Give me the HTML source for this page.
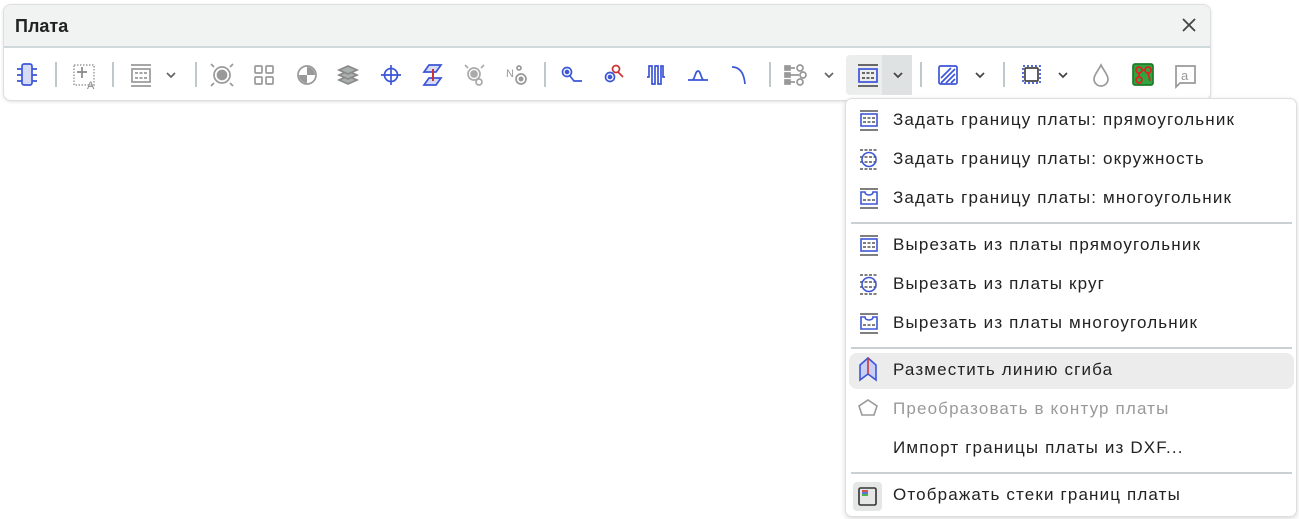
<!DOCTYPE html>
<html><head><meta charset="utf-8"><style>
*{box-sizing:border-box;margin:0;padding:0}
body{width:1299px;height:519px;background:#fff;position:relative;overflow:hidden;font-family:"Liberation Sans","Noto Sans CJK SC",sans-serif}
.panel{position:absolute;left:3px;top:4px;width:1208px;height:97px;border:1px solid #dcdfe0;border-radius:8px;background:#fff;box-shadow:0 1px 3px rgba(0,0,0,.12);overflow:hidden}
.hdr{height:43px;background:#f1f2f2;border-bottom:2px solid #cfd8da;position:relative}
.hdr b{position:absolute;left:11px;top:11px;font-size:18px;color:#222}
.x{position:absolute;right:12px;top:11px}
.sep{position:absolute;top:62px;width:2px;height:25px;background:#bfc8ca}
.menu{position:absolute;left:845px;top:98px;width:452px;height:419px;background:#fff;border:1px solid #dcdfe0;border-radius:7px;box-shadow:0 2px 6px rgba(0,0,0,.15)}
.it{position:absolute;left:47px;font-size:17px;letter-spacing:1.15px;color:#222}
.ms{position:absolute;left:5px;width:441px;height:2px;background:#c9d1d3}
</style></head><body>
<div class="panel"><div class="hdr"><b>Плата</b>
<svg class="x" width="18" height="18" viewBox="0 0 18 18"><path d="M3 3L15 15M15 3L3 15" stroke="#444" stroke-width="1.8"/></svg></div></div>

<svg style="position:absolute;left:0;top:0" width="1299" height="110">
<g fill="none" stroke-width="1.7">
<rect x="22" y="64" width="10" height="21" rx="2" fill="#d6dcf5" stroke="#3d56d6"/><path d="M17 69h5M32 69h5M17 75h5M32 75h5M17 81h5M32 81h5" stroke="#3d56d6"/>
<rect x="74" y="65" width="20" height="20" stroke="#aaa" stroke-dasharray="1.5 1.5"/><path d="M77 72h10M82 67v11" stroke="#888"/>
<text x="87" y="89" font-size="11" fill="#888" stroke="none" font-family="Liberation Sans">A</text>
<g stroke="#999"><path d="M131 65h20M131 86h20"/><rect x="132" y="69" width="18" height="13"/><path d="M135 73h12M135 78h12" stroke-dasharray="3 1.5"/></g>
<path d="M167 73l4 4 4-4" stroke="#666"/>
<g stroke="#999"><circle cx="222" cy="75" r="8"/><circle cx="222" cy="75" r="4.5" fill="#999"/><path d="M211 64l3 3M233 64l-3 3M211 86l3-3M233 86l-3-3"/></g>
<g stroke="#999"><rect x="255" y="66" width="7" height="7" rx="1"/><rect x="266" y="66" width="7" height="7" rx="1"/><rect x="255" y="77" width="7" height="7" rx="1"/><rect x="266" y="77" width="7" height="7" rx="1"/></g>
<circle cx="307" cy="75" r="9" stroke="#999"/><path d="M307 75V67A8 8 0 0 1 315 75ZM307 75H299A8 8 0 0 0 307 83Z" fill="#999"/>
<g fill="#aab0b0" stroke="#888"><path d="M339 80l9-4 9 4-9 4z"/><path d="M339 75l9-4 9 4-9 4z"/><path d="M339 70l9-4 9 4-9 4z"/></g>
<g stroke="#3d56d6"><circle cx="391" cy="75" r="6.5"/><path d="M381 75h20M391 65v20"/></g>
<g stroke="#3d56d6" fill="#d6dcf5"><path d="M424 72l5-7h12l-5 7z"/><path d="M424 85l5-7h12l-5 7z"/></g><path d="M433 69v12" stroke="#c33" stroke-width="2"/>
<g stroke="#aaa"><circle cx="474" cy="74" r="6"/><circle cx="474" cy="74" r="3" fill="#aaa"/><path d="M465 65l3 3M484 65l-3 3"/><circle cx="479" cy="82" r="3"/></g>
<text x="506" y="77" font-size="11" fill="#999" stroke="none" font-family="Liberation Sans">N</text><circle cx="521" cy="79" r="5" stroke="#999"/><circle cx="521" cy="79" r="2.5" fill="#999"/><circle cx="519" cy="68" r="2" stroke="#999"/>
<g stroke="#3d56d6"><circle cx="567" cy="72" r="4.5"/><circle cx="567" cy="72" r="1.5" fill="#3d56d6"/><path d="M570 76l4 5h8"/></g>
<g stroke="#3d56d6"><circle cx="610" cy="77" r="4.5"/><circle cx="610" cy="77" r="1.5" fill="#3d56d6"/></g><g stroke="#c33"><circle cx="616" cy="69" r="3.5"/><path d="M618 72l5 5"/></g>
<path d="M647 77h2V66h3v18h3V66h3v18h3V66h2v11h2" stroke="#3d56d6"/>
<path d="M688 80h20M692 80c3 0 3-9 6-9s3 9 6 9" stroke="#3d56d6"/>
<path d="M732 67c8 0 12 6 13 17" stroke="#3d56d6"/>
<g stroke="#999"><rect x="785" y="66" width="5" height="4" fill="#999"/><rect x="785" y="73" width="5" height="4" fill="#999"/><rect x="785" y="80" width="5" height="4" fill="#999"/><path d="M790 68h5M790 75h9M790 82h5"/><circle cx="800" cy="68" r="3"/><circle cx="803" cy="75" r="3"/><circle cx="800" cy="82" r="3"/></g>
<path d="M825 73l4 4 4-4" stroke="#666"/>
</g>
<rect x="846" y="55" width="66" height="40" rx="4" fill="#eceeee"/><rect x="882" y="55" width="30" height="40" fill="#dfe2e2"/>
<g fill="none" stroke-width="1.7">
<g stroke="#3d56d6"><path d="M858 65h20M858 86h20" stroke="#555"/><rect x="859" y="69" width="18" height="13"/><path d="M862 73h12M862 78h12" stroke="#555" stroke-dasharray="3 1.5"/></g>
<path d="M894 73l4 4 4-4" stroke="#444"/>
<rect x="939" y="66" width="18" height="18" rx="1.5" stroke="#3d56d6"/><path d="M941 78l10-10M941 83l14-14M946 83l9-9M951 83l4-4" stroke="#3d56d6"/>
<path d="M976 73l4 4 4-4" stroke="#444"/>
<rect x="1023" y="66" width="17" height="17" stroke="#3d56d6" stroke-dasharray="2 2"/><rect x="1025" y="68" width="13" height="13" rx="1" stroke="#444"/>
<path d="M1059 73l4 4 4-4" stroke="#444"/>
<path d="M1101 65c-3 6-7 10-7 14a7 7 0 0 0 14 0c0-4-4-8-7-14z" stroke="#999"/>
<rect x="1133" y="64" width="20" height="21" rx="2" fill="#2fa43f" stroke="#1f7a2a"/><g stroke="#d22"><circle cx="1139" cy="70" r="3"/><circle cx="1148" cy="70" r="3"/><circle cx="1139" cy="80" r="3"/><path d="M1142 70h3M1139 73v4M1148 73l2 8"/></g>
<path d="M1176 66h19v17h-15l-4 4z" stroke="#999"/><text x="1181" y="80" font-size="13" fill="#999" stroke="none" font-family="Liberation Sans">a</text>
</g></svg>
<div class="sep" style="left:55px"></div><div class="sep" style="left:112px"></div><div class="sep" style="left:195px"></div><div class="sep" style="left:544px"></div><div class="sep" style="left:769px"></div><div class="sep" style="left:920px"></div><div class="sep" style="left:1003px"></div>

<div class="menu">
<svg style="position:absolute;left:0;top:0" width="452" height="419"><g fill="none" stroke-width="1.6">
<g transform="translate(12,10)"><path d="M2 2h18M2 21h18" stroke="#555"/><rect x="3" y="5" width="16" height="12" stroke="#3d56d6"/><path d="M5 9h12M5 13h12" stroke="#555" stroke-dasharray="3 1.5"/></g>
<g transform="translate(12,49)"><path d="M2 2h18M2 21h18M2 9h18M2 14h18" stroke="#555" stroke-dasharray="3 1.5"/><circle cx="11" cy="11.5" r="7" stroke="#3d56d6"/></g>
<g transform="translate(12,88)"><path d="M2 2h18M2 21h18" stroke="#555"/><path d="M3 5h4c0 4 8 4 8 0h4v12H3z" stroke="#3d56d6"/><path d="M5 13h12" stroke="#555" stroke-dasharray="3 1.5"/></g>
<g transform="translate(12,135)"><path d="M2 2h18M2 21h18" stroke="#555"/><rect x="3" y="5" width="16" height="12" stroke="#3d56d6"/><path d="M5 9h12M5 13h12" stroke="#555" stroke-dasharray="3 1.5"/></g>
<g transform="translate(12,174)"><path d="M2 2h18M2 21h18M2 9h18M2 14h18" stroke="#555" stroke-dasharray="3 1.5"/><circle cx="11" cy="11.5" r="7" stroke="#3d56d6"/></g>
<g transform="translate(12,213)"><path d="M2 2h18M2 21h18" stroke="#555"/><path d="M3 5h4c0 4 8 4 8 0h4v12H3z" stroke="#3d56d6"/><path d="M5 13h12" stroke="#555" stroke-dasharray="3 1.5"/></g>
</g>
<rect x="3" y="254" width="445" height="36" rx="8" fill="#ececec"/>
<g fill="none" stroke-width="1.6">
<path d="M14 281V266l8-7 8 7v15l-8-6z" fill="#c7cff5" stroke="#3d56d6"/><path d="M22 259v16" stroke="#c33"/>
<path d="M22 301l9 6-3 9h-12l-3-9z" stroke="#999"/>
<rect x="7" y="383" width="29" height="29" rx="4" fill="#e5e7e7" stroke="none"/><rect x="13" y="389" width="17" height="17" rx="1.5" stroke="#333"/>
<path d="M16 392h6" stroke="#c33" stroke-width="1.6"/><path d="M16 394h6" stroke="#3d56d6" stroke-width="1.6"/><path d="M16 396h6" stroke="#2a2" stroke-width="1.6"/>
</g></svg>
<div class="it" style="top:11px">Задать границу платы: прямоугольник</div>
<div class="it" style="top:50px">Задать границу платы: окружность</div>
<div class="it" style="top:89px">Задать границу платы: многоугольник</div>
<div class="ms" style="top:123px"></div>
<div class="it" style="top:136px">Вырезать из платы прямоугольник</div>
<div class="it" style="top:175px">Вырезать из платы круг</div>
<div class="it" style="top:214px">Вырезать из платы многоугольник</div>
<div class="ms" style="top:248px"></div>
<div class="it" style="top:261px">Разместить линию сгиба</div>
<div class="it" style="top:300px;color:#999">Преобразовать в контур платы</div>
<div class="it" style="top:339px">Импорт границы платы из DXF...</div>
<div class="ms" style="top:373px"></div>
<div class="it" style="top:386px">Отображать стеки границ платы</div>
</div>
</body></html>
